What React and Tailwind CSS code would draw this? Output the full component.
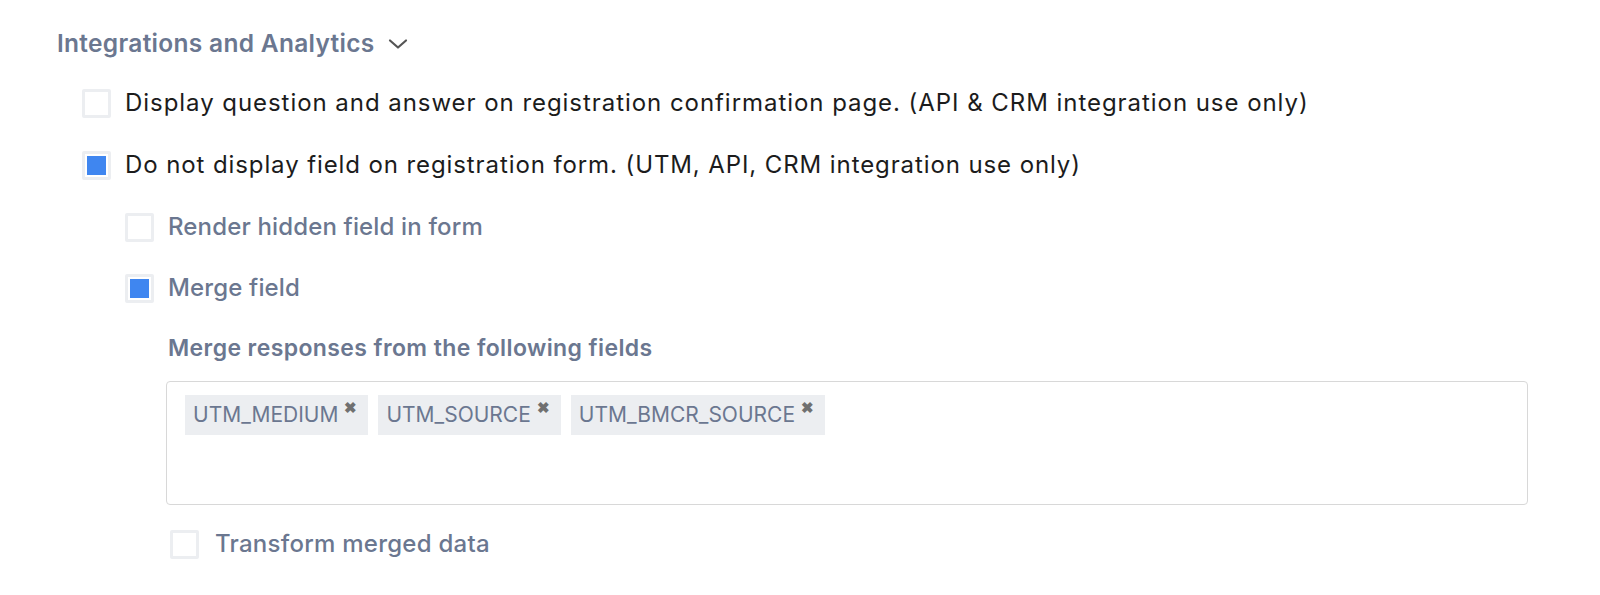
import React from "react";

const font = { fontFamily: "Inter, 'Noto Sans', sans-serif" };

function Box({ checked }) {
  return (
    <div className="w-[29px] h-[29px] shrink-0 border-[3px] border-[#eceef1] bg-white flex items-center justify-center rounded-[2px]">
      {checked && <div className="w-[19px] h-[19px] bg-[#3f86f0]" />}
    </div>
  );
}

function Row({ checked, children, className = "", textClass = "" }) {
  return (
    <div className={`flex items-center h-[60px] ${className}`}>
      <Box checked={checked} />
      <span className={`ml-[14px] whitespace-nowrap ${textClass}`}>{children}</span>
    </div>
  );
}

function Tag({ label }) {
  return (
    <div className="h-[40px] bg-[#eceef1] flex items-start pl-[8px] pr-[11px]">
      <span className="mt-[8px] text-[21px] leading-[24px] text-[#6b7790]">{label}</span>
      <span className="ml-[6px] mt-[3px] text-[15px] font-bold text-[#707070] leading-[20px]">✖</span>
    </div>
  );
}

export default function App() {
  return (
    <div className="bg-white w-[1600px] h-[595px] pt-[28px] pl-[57px]" style={font}>
      <div className="flex items-center h-[30px]">
        <span className="text-[24.5px] font-semibold tracking-[0.3px] text-[#6b7790] whitespace-nowrap">Integrations and Analytics</span>
        <svg className="ml-[12px] mt-[2px]" width="22" height="14" viewBox="0 0 22 14" fill="none">
          <path d="M3 3.5 L11 10.5 L19 3.5" stroke="#555" strokeWidth="2.2" strokeLinecap="round" strokeLinejoin="round" />
        </svg>
      </div>
      <div className="mt-[15px] pl-[25px]">
        <Row textClass="text-[24px] tracking-[0.95px] text-[#1c1c1c]">
          Display question and answer on registration confirmation page. (API &amp; CRM integration use only)
        </Row>
        <Row checked textClass="text-[24px] tracking-[0.9px] text-[#1c1c1c]" className="mt-[2px]">
          Do not display field on registration form. (UTM, API, CRM integration use only)
        </Row>
        <div className="pl-[43px] mt-[2px]">
          <Row textClass="text-[24px] tracking-[0.15px] text-[#6b7790] font-medium">Render hidden field in form</Row>
          <Row checked textClass="text-[24px] tracking-[0.15px] text-[#6b7790] font-medium" className="mt-[1px]">Merge field</Row>
          <div className="pl-[43px]">
            <div className="h-[60px] flex items-center">
              <span className="text-[23px] tracking-[0.4px] font-semibold text-[#6b7790] whitespace-nowrap">Merge responses from the following fields</span>
            </div>
            <div className="mt-[3px] -ml-[2px] w-[1362px] h-[124px] border border-[#d8d8d8] rounded-[4px] pt-[13px] pl-[18px] flex items-start gap-[10px]">
              <Tag label="UTM_MEDIUM" />
              <Tag label="UTM_SOURCE" />
              <Tag label="UTM_BMCR_SOURCE" />
            </div>
            <Row className="mt-[9px] pl-[2px]" textClass="text-[24px] tracking-[0.25px] text-[#6b7790] font-medium ml-[16px]">Transform merged data</Row>
          </div>
        </div>
      </div>
    </div>
  );
}
